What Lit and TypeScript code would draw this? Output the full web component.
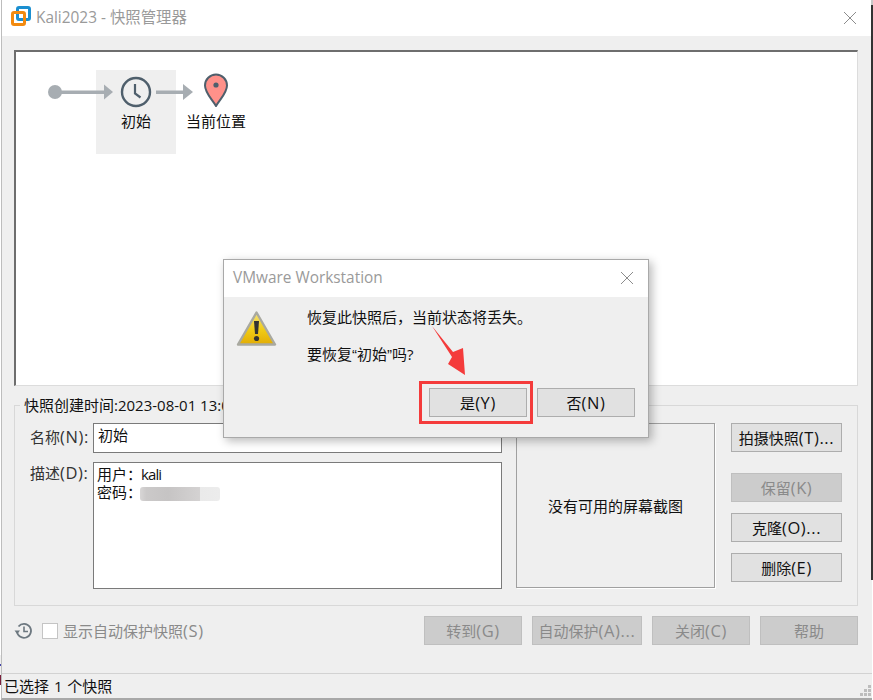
import { LitElement, html, css } from "lit";
import { customElement } from "lit/decorators.js";

@customElement("app-root")
export class AppRoot extends LitElement {
  static styles = css`
    :host { display: block; width: 873px; height: 700px; position: relative; overflow: hidden; background: #fff;
      font-family: "Open Sans", "Noto Sans CJK SC", "Liberation Sans", sans-serif; font-size: 15px; color: #111; }
    * { box-sizing: border-box; }
    .win { width: 871px; height: 700px; border-left: 1px solid #bdbdbd; border-bottom: 2px solid #a8a8a8; display: flex; flex-direction: column; background: #efefef; margin-left: 1px; }
    .edge { position: absolute; left: 871px; top: 0; width: 2px; height: 580px; background: #333; }
    .edge2 { position: absolute; left: 871px; top: 0; width: 2px; height: 5px; background: #c8c8c8; }
    .title { height: 36px; background: #fff; display: flex; align-items: center; padding: 0 0 4px 9px; gap: 5px; color: #9a9a9a; font-size: 15.4px; flex: none; position: relative; }
    .x { position: absolute; }
    .title .x { right: 15px; top: 11px; }
    .body { flex: 1; display: flex; flex-direction: column; padding: 14px 14px 0 12px; min-height: 0; }
    .canvas { height: 336px; flex: none; background: #fff; border-top: 2px solid #6e6e6e; border-left: 2px solid #6e6e6e; border-right: 1px solid #dcdcdc; border-bottom: 1px solid #dcdcdc; padding: 18px 0 0 32px; display: flex; }
    .tree { display: flex; align-items: flex-start; }
    .start { width: 66px; height: 22px; flex: none; margin-top: 11px; position: relative; z-index: 1; }
    .sel { width: 80px; height: 84px; background: #efefef; margin-left: -18px; display: flex; flex-direction: column; align-items: center; padding-top: 6px; flex: none; }
    .sel svg { display: block; }
    .lbl { line-height: 20px; margin-top: 3px; color: #111; white-space: nowrap; }
    .link { width: 38px; height: 22px; flex: none; margin-left: -20px; margin-top: 11px; }
    .pin { display: flex; flex-direction: column; align-items: center; width: 60px; margin-left: -8px; padding-top: 3px; flex: none; }
    .pin .lbl { margin-top: 4px; }
    .group { height: 201px; flex: none; margin-top: 19px; border: 1px solid #d8d8d8; position: relative; display: flex; padding: 17px 16px 0 15px; gap: 14px; }
    .legend { position: absolute; left: 5px; top: -10px; padding: 0 4px; background: #efefef; line-height: 18px; white-space: nowrap; }
    .fields { width: 472px; display: grid; grid-template-columns: 63px 409px; grid-template-rows: 30px 127px; row-gap: 9px; flex: none; }
    .flabel { text-align: right; padding-right: 6px; line-height: 22px; color: #333; white-space: nowrap; }
    .flabel.n { padding-top: 3px; }
    .flabel.d { padding-top: 0; }
    .box { background: #fff; border: 1px solid #7a7a7a; padding: 1px 4px; line-height: 20px; }
    .box.desc { padding: 2px 3px; line-height: 18px; }
    .k { letter-spacing: -0.9px; margin-left: -1px; }
    .mask { display: inline-block; vertical-align: -3px; width: 80px; height: 14px; margin-left: -2px; background: linear-gradient(90deg, #d8d6d6 0, #cbc9c9 8%, #c6c4c4 35%, #cfcdcd 60%, #d4d2d2 75%, #eaeaea 75%, #ececec 100%); border-radius: 3px; }
    .shot { width: 199px; height: 165px; border: 1px solid #a0a0a0; box-shadow: 1px 1px 0 #fff; display: flex; align-items: center; justify-content: center; flex: none; }
    .side { display: flex; flex-direction: column; margin-left: 2px; flex: none; }
    .btn { height: 29px; display: flex; align-items: center; justify-content: center; background: #e1e1e1; border: 1px solid #adadad; color: #111; flex: none; white-space: nowrap; }
    .btn.off { background: #ccc; border-color: #bfbfbf; color: #8a8a8a; }
    .l { font-size: 16.5px; letter-spacing: 0.6px; line-height: 1; }
    .side .btn { width: 111px; }
    .side .btn:nth-child(1) { margin-bottom: 21px; }
    .side .btn:nth-child(2) { margin-bottom: 11px; }
    .side .btn:nth-child(3) { margin-bottom: 11px; }
    .bottom { display: flex; align-items: center; margin-top: 10px; height: 29px; flex: none; }
    .cb { width: 16px; height: 16px; background: #fff; border: 1px solid #c4c4c4; margin-left: 8px; flex: none; }
    .cblabel { color: #8a8a8a; margin-left: 5px; flex: 1; }
    .acts { display: flex; gap: 10px; }
    .w98 { width: 98px; } .w110 { width: 110px; }
    .spacer { flex: 1; }
    .status { height: 25px; border-top: 1px solid #d2d2d2; flex: none; padding-left: 2px; line-height: 24px; word-spacing: 1px; position: relative; }
    .grip { position: absolute; right: 0; bottom: 1px; }
    .dlg { position: absolute; left: 223px; top: 259px; width: 426px; height: 179px; background: #efefef; border: 1px solid #a9a9a9; box-shadow: 3px 3px 9px rgba(0,0,0,.28); display: flex; flex-direction: column; }
    .dtitle { height: 37px; background: #fff; flex: none; display: flex; align-items: center; padding: 0 0 2px 9px; color: #9a9a9a; font-size: 15.4px; position: relative; }
    .dtitle .x { right: 14px; top: 11px; }
    .dmain { display: flex; height: 91px; flex: none; padding: 10px 0 0 12px; }
    .warn { flex: none; width: 41px; margin-top: 3px; }
    .msg { margin-left: 30px; line-height: 20px; }
    .msg p { margin: 0 0 17px; }
    .q { font-family: "Liberation Sans", sans-serif; }
    .dbtns { display: flex; justify-content: flex-end; gap: 10px; padding-right: 13px; }
    .dbtns .btn { width: 98px; }
    .red { position: absolute; left: 419px; top: 381px; width: 114px; height: 43px; border: 3px solid #f43b3b; }
    .arrow { position: absolute; left: 425px; top: 320px; }
    .spots { position: absolute; left: 0; top: 655px; width: 1px; height: 30px; background: linear-gradient(#efefef 0 30%, #4444aa 30% 38%, #efefef 38% 66%, #7a1f3d 66% 100%); }
  `;

  private closeIcon(s: number) {
    return html`<svg class="x" width="${s}" height="${s}" viewBox="0 0 14 14"><path d="M1 1 13 13M13 1 1 13" stroke="#8c8c8c" stroke-width="1" fill="none"/></svg>`;
  }

  private label(cjk: string, latin: string) {
    return html`<span>${cjk}<span class="l">${latin}</span></span>`;
  }

  render() {
    return html`
      <div class="win">
        <div class="title">
          <svg width="20" height="20" viewBox="0 0 20 20">
            <rect x="6.5" y="1.5" width="12" height="12" rx="1.5" fill="none" stroke="#1b8fd0" stroke-width="3"/>
            <rect x="1.5" y="6.5" width="12" height="12" rx="1.5" fill="none" stroke="#f28a0f" stroke-width="3"/>
          </svg>
          <span>Kali2023 - 快照管理器</span>
          ${this.closeIcon(14)}
        </div>
        <div class="body">
          <div class="canvas">
            <div class="tree">
              <svg class="start" viewBox="0 0 66 22">
                <circle cx="7" cy="11" r="7" fill="#a7adb2"/>
                <path d="M7 9.5H58V13H7Z" fill="#a7adb2"/>
                <path d="M56 3.5 65 11 56 18.5Z" fill="#a7adb2"/>
              </svg>
              <div class="sel">
                <svg width="32" height="32" viewBox="0 0 32 32">
                  <circle cx="16" cy="16" r="14" fill="none" stroke="#4f5f6c" stroke-width="2.4"/>
                  <path d="M15 8V17.5L20.5 21.5" fill="none" stroke="#4f5f6c" stroke-width="2.2"/>
                </svg>
                <div class="lbl">初始</div>
              </div>
              <svg class="link" viewBox="0 0 38 22">
                <path d="M0 9.5H29V13H0Z" fill="#a7adb2"/>
                <path d="M27 3 37 11 27 19Z" fill="#a7adb2"/>
              </svg>
              <div class="pin">
                <svg width="26" height="34" viewBox="0 0 26 34">
                  <path d="M13 33C9 26 2 20 2 12.5A11 11 0 0 1 24 12.5C24 20 17 26 13 33Z" fill="#ff918a" stroke="#4f5f6c" stroke-width="2"/>
                  <circle cx="13" cy="12" r="2.6" fill="#4f5f6c"/>
                </svg>
                <div class="lbl">当前位置</div>
              </div>
            </div>
          </div>
          <div class="group">
            <div class="legend">快照创建时间:2023-08-01 13:06</div>
            <div class="fields">
              <div class="flabel n">${this.label("名称", "(N):")}</div>
              <div class="box">初始</div>
              <div class="flabel d">${this.label("描述", "(D):")}</div>
              <div class="box desc">用户：<span class="k">kali</span><br />密码：<span class="mask"></span></div>
            </div>
            <div class="shot">没有可用的屏幕截图</div>
            <div class="side">
              <div class="btn">${this.label("拍摄快照", "(T)...")}</div>
              <div class="btn off">${this.label("保留", "(K)")}</div>
              <div class="btn">${this.label("克隆", "(O)...")}</div>
              <div class="btn">${this.label("删除", "(E)")}</div>
            </div>
          </div>
          <div class="bottom">
            <svg width="20" height="20" viewBox="0 0 20 20">
              <path d="M4.5 5.5A7 7 0 1 1 3 10" fill="none" stroke="#6d7880" stroke-width="1.8"/>
              <path d="M0.5 9.5H6L3.2 13Z" fill="#6d7880"/>
              <path d="M10 5.5V10.5H14" fill="none" stroke="#6d7880" stroke-width="1.6"/>
            </svg>
            <div class="cb"></div>
            <div class="cblabel">${this.label("显示自动保护快照", "(S)")}</div>
            <div class="acts">
              <div class="btn off w98">${this.label("转到", "(G)")}</div>
              <div class="btn off w110">${this.label("自动保护", "(A)...")}</div>
              <div class="btn off w98">${this.label("关闭", "(C)")}</div>
              <div class="btn off w98">帮助</div>
            </div>
          </div>
          <div class="spacer"></div>
        </div>
        <div class="status">已选择 1 个快照
          <svg class="grip" width="12" height="12" viewBox="0 0 12 12" fill="#bdbdbd">
            <rect x="8" y="0" width="3" height="3"/><rect x="4" y="4" width="3" height="3"/><rect x="8" y="4" width="3" height="3"/>
            <rect x="0" y="8" width="3" height="3"/><rect x="4" y="8" width="3" height="3"/><rect x="8" y="8" width="3" height="3"/>
          </svg>
        </div>
      </div>
      <div class="edge"></div>
      <div class="edge2"></div>
      <div class="spots"></div>

      <div class="dlg">
        <div class="dtitle">VMware Workstation ${this.closeIcon(14)}</div>
        <div class="dmain">
          <svg class="warn" width="41" height="38" viewBox="0 0 41 38">
            <defs>
              <linearGradient id="w" x1="0" y1="0" x2="0" y2="1">
                <stop offset="0" stop-color="#f6e27a"/><stop offset=".55" stop-color="#f0cb14"/><stop offset="1" stop-color="#e2ac05"/>
              </linearGradient>
            </defs>
            <path d="M20.5 2.5 39 34.5H2Z" fill="url(#w)" stroke="#a9a9a0" stroke-width="2.4" stroke-linejoin="round"/>
            <path d="M18 11H23L22 24H19Z" fill="#333"/>
            <circle cx="20.5" cy="28.5" r="2.6" fill="#333"/>
          </svg>
          <div class="msg">
            <p>恢复此快照后，当前状态将丢失。</p>
            <p>要恢复<span class="q">“</span>初始<span class="q">”</span>吗?</p>
          </div>
        </div>
        <div class="dbtns">
          <div class="btn">${this.label("是", "(Y)")}</div>
          <div class="btn">${this.label("否", "(N)")}</div>
        </div>
      </div>
      <div class="red"></div>
      <svg class="arrow" width="50" height="60" viewBox="0 0 50 60">
        <path d="M7 6 28 32 38 28 40 55 23 44 27 37Z" fill="#f43b3b"/>
      </svg>
    `;
  }
}
